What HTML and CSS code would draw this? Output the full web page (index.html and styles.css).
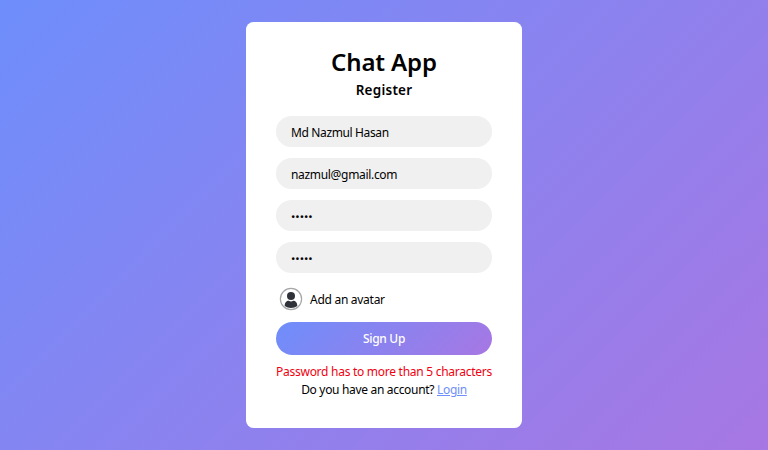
FILE: index.html
```html
<!DOCTYPE html>
<html lang="en">
<head>
<meta charset="utf-8">
<title>Chat App</title>
<link rel="stylesheet" href="styles.css">
</head>
<body>
<main class="card">
  <h1 class="logo"><span>Chat App</span></h1>
  <h2 class="title"><span>Register</span></h2>
  <form class="form">
    <div class="field name"><span>Md Nazmul Hasan</span></div>
    <div class="field email"><span>nazmul@gmail.com</span></div>
    <div class="field password"><span>•••••</span></div>
    <div class="field password"><span>•••••</span></div>
    <label class="avatar">
      <svg class="avatar-icon" viewBox="0 0 24 24" width="24" height="24">
        <circle cx="12" cy="12" r="10.6" fill="#fff" stroke="#a5a6a8" stroke-width="1.2"/>
        <circle cx="12" cy="9" r="4" fill="#2f3238"/>
        <path d="M5.700 19c0-3.700 2-5.200 4-5.200 1.400.9 3.200.9 4.600 0 2 0 4 1.500 4 5.200C14.800 21.600 9.200 21.600 5.700 19z" fill="#2f3238"/>
      </svg>
      <span>Add an avatar</span>
    </label>
    <button class="submit" type="button">Sign Up</button>
  </form>
  <p class="error"><span>Password has to more than 5 characters</span></p>
  <p class="note"><span>Do you have an account?</span> <a class="link" href="#">Login</a></p>
</main>
</body>
</html>
```
FILE: styles.css
```css
* { box-sizing: border-box; margin: 0; padding: 0; }
body {
  height: 450px;
  overflow: hidden;
  display: flex;
  align-items: center;
  justify-content: center;
  background: linear-gradient(135deg, #6e8efb, #a777e3);
  font-family: "Noto Sans", "Open Sans", sans-serif;
  font-size: 12px;
  color: #000;
}
.card {
  width: 276px;
  height: 406.5px;
  padding: 24px 30px 0;
  border-radius: 7.5px;
  background: #fff;
  display: flex;
  flex-direction: column;
}
.logo { font-size: 24px; line-height: 32px; font-weight: 600; letter-spacing: -0.12px; text-align: center; }
.title { font-size: 13.5px; line-height: 24px; font-weight: 600; letter-spacing: 0.25px; text-align: center; }
.form { display: flex; flex-direction: column; margin-top: 14.5px; }
.field {
  height: 30.7px;
  margin-bottom: 11.2px;
  padding: 1px 15px 0;
  border-radius: 16px;
  background: #f0f0f0;
  line-height: 31px;
}
.name { letter-spacing: -0.37px; }
.email { letter-spacing: -0.32px; }
.password { font-size: 11.5px; }
.avatar { display: flex; align-items: center; gap: 7px; height: 24px; margin: 3px 0 11px 3px; letter-spacing: -0.28px; }
.avatar span { padding-top: 2px; }
.submit {
  height: 33px;
  border: 0;
  border-radius: 17px;
  background: linear-gradient(135deg, #6e8efb, #a777e3);
  color: #fff;
  font: 500 12px/33px "Noto Sans", "Open Sans", sans-serif;
  letter-spacing: -0.3px;
}
.error { margin-top: 8.5px; line-height: 18px; color: #f00010; letter-spacing: -0.27px; text-align: center; white-space: nowrap; }
.note { line-height: 18px; letter-spacing: -0.32px; text-align: center; white-space: nowrap; }
.link { color: #6e8efb; }
```
